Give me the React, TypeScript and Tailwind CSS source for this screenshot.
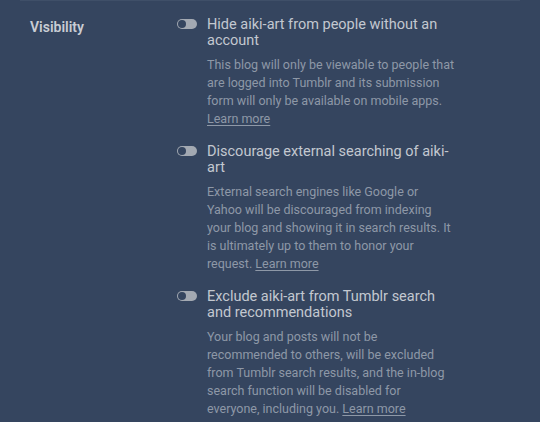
const items = [
  {
    title: 'Hide aiki-art from people without an account',
    desc: 'This blog will only be viewable to people that are logged into Tumblr and its submission form will only be available on mobile apps.',
  },
  {
    title: 'Discourage external searching of aiki-art',
    desc: 'External search engines like Google or Yahoo will be discouraged from indexing your blog and showing it in search results. It is ultimately up to them to honor your request.',
  },
  {
    title: 'Exclude aiki-art from Tumblr search and recommendations',
    desc: 'Your blog and posts will not be recommended to others, will be excluded from Tumblr search results, and the in-blog search function will be disabled for everyone, including you.',
  },
]

function Toggle() {
  return (
    <span className="mt-[2px] flex h-[10px] w-[20px] shrink-0 items-center rounded-full bg-[#a3a9b2] px-[1px]">
      <span className="h-[8px] w-[8px] rounded-full bg-[#35455f]" />
    </span>
  )
}

export default function App() {
  return (
    <div className="h-[422px] w-[540px] overflow-hidden bg-[#35455f] font-['Roboto',sans-serif]">
      <div className="mx-[20px] h-[1px] bg-[#3f4f68]" />
      <div className="flex pt-[16px]">
        <div className="w-[177px] shrink-0 pl-[30px] text-[14px] font-semibold leading-[20px] text-[#c9cdd4]">
          Visibility
        </div>
        <div className="flex w-[287px] flex-col gap-[16px]">
          {items.map((it) => (
            <div key={it.title} className="flex gap-[10px]">
              <Toggle />
              <div className="flex w-[250px] flex-col">
                <div className="text-[14.5px] leading-[16px] text-[#c3c8d0]">{it.title}</div>
                <p className="mt-[7px] w-[249px] text-[12.5px] leading-[18px] text-[#8e98a7]">
                  {it.desc} <a className="underline underline-offset-2">Learn more</a>
                </p>
              </div>
            </div>
          ))}
        </div>
      </div>
    </div>
  )
}
